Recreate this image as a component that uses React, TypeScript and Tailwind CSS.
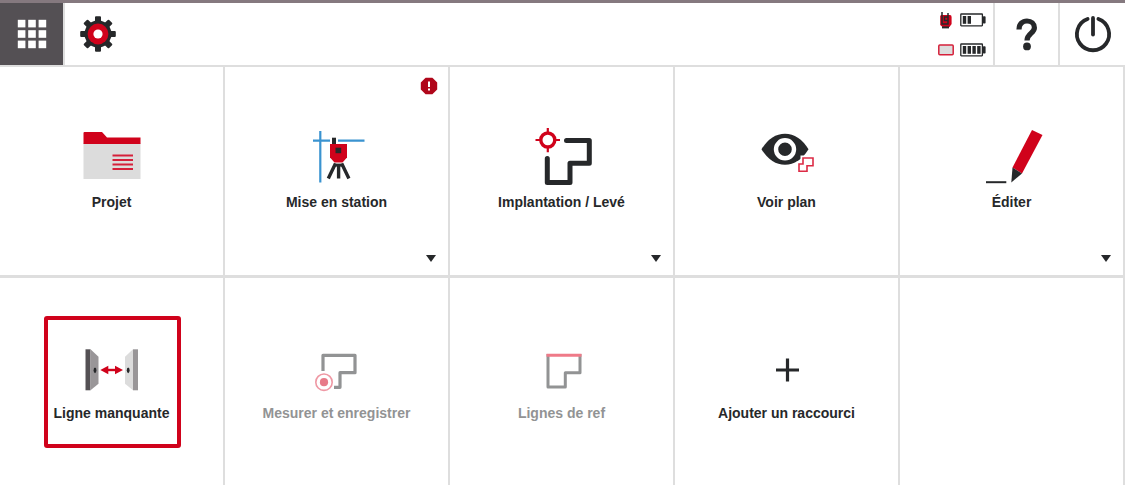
import type { ReactNode } from "react";

type Tile = {
  label: string;
  icon?: ReactNode;
  disabled?: boolean;
  highlighted?: boolean;
  alert?: boolean;
  menu?: boolean;
};

function Icon({ children }: { children: ReactNode }) {
  return (
    <svg viewBox="0 0 64 64" className="h-16 w-16" fill="none" aria-hidden="true">
      {children}
    </svg>
  );
}

function AppsIcon() {
  return (
    <svg viewBox="0 0 30 30" className="h-[30px] w-[30px]" fill="#fff" aria-hidden="true">
      {[0.8, 11.2, 21.6].map((y) =>
        [0.8, 11.2, 21.6].map((x) => <rect key={`${x}-${y}`} x={x} y={y} width="7.6" height="7.6" />)
      )}
    </svg>
  );
}

function GearIcon() {
  return (
    <svg viewBox="0 0 36 36" className="h-9 w-9" aria-hidden="true">
      {[0, 45, 90, 135, 180, 225, 270, 315].map((a) => (
        <path
          key={a}
          d="M13.6 8L15 4.5V1.2Q15 0.2 16 0.2H20Q21 0.2 21 1.2V4.5L22.4 8Z"
          fill="#26282a"
          transform={`rotate(${a} 18 18)`}
        />
      ))}
      <circle cx="18" cy="18" r="13.4" fill="#26282a" />
      <circle cx="18" cy="18" r="10.4" fill="#d0021b" />
      <circle cx="18" cy="18" r="4.6" fill="#fff" />
    </svg>
  );
}

function Battery({ bars }: { bars: number }) {
  return (
    <svg viewBox="0 0 26 14" className="h-[14px] w-[26px]" aria-hidden="true">
      <rect x="0.8" y="1" width="21.6" height="11.8" rx="0.5" fill="#fff" stroke="#26282a" strokeWidth="1.3" />
      <rect x="22.8" y="3.2" width="2.8" height="7.4" rx="0.8" fill="#26282a" />
      {[2.8, 7.6, 12.4, 17.2].slice(0, bars).map((x) => (
        <rect key={x} x={x} y="3" width="3.4" height="7.8" fill="#26282a" />
      ))}
    </svg>
  );
}

function StationIcon() {
  return (
    <svg viewBox="0 0 16 18" className="h-[18px] w-4" aria-hidden="true">
      <path d="M3 4H12Q13.6 4 13.6 6V13L11.5 16H4.5L2.2 14V5Z" fill="#d0021b" />
      <path d="M4 1V13H10V6H6.5V9.5H10M10 2V6" fill="none" stroke="#26282a" strokeWidth="1.5" />
      <path d="M4 15.4H11V17.4H4Z" fill="#26282a" />
    </svg>
  );
}

function TabletIcon() {
  return (
    <svg viewBox="0 0 16 12" className="h-3 w-4" aria-hidden="true">
      <rect x="0.8" y="1" width="14.4" height="9.8" rx="1" fill="#ddd" stroke="#d5203a" strokeWidth="1.5" />
    </svg>
  );
}

function HelpIcon() {
  return (
    <svg viewBox="0 0 22 34" className="h-[34px] w-[22px]" fill="none" aria-hidden="true">
      <path d="M3 12.4C3 7 6.5 4 11 4S18.4 6.6 18.4 10.8C18.4 16.4 11 16.4 11 23.6" stroke="#26282a" strokeWidth="5.2" />
      <circle cx="11" cy="29.4" r="3.9" fill="#26282a" />
    </svg>
  );
}

function PowerIcon() {
  return (
    <svg viewBox="0 0 40 40" className="h-10 w-10" fill="none" stroke="#26282a" strokeWidth="3.8" strokeLinecap="round" aria-hidden="true">
      <path d="M14.6 5A16.1 16.1 0 1 0 25.4 5" />
      <path d="M20 4V20.5" />
    </svg>
  );
}

const tiles: Tile[] = [
  {
    label: "Projet",
    icon: (
      <Icon>
        <path d="M3.5 18H60.5V54H3.5Z" fill="#dcdcdc" />
        <path d="M3.5 8Q3.5 7 4.5 7H22L27 12.4H60.5V19H3.5Z" fill="#d0021b" />
        <path d="M32.5 30.5H53M32.5 35H53M32.5 39.5H53M32.5 44H53" stroke="#d5203a" strokeWidth="2.2" />
      </Icon>
    ),
  },
  {
    label: "Mise en station",
    alert: true,
    menu: true,
    icon: (
      <Icon>
        <path d="M15.3 6V57.5M8 15.6H25M33 15.6H59.5" stroke="#3a93d0" strokeWidth="2.2" />
        <path d="M27 12.7H31V19.5H27Z" fill="#26282a" />
        <path d="M25 19H42V32.5L37.5 37.5H29.5L25 32.5Z" fill="#d0021b" />
        <path d="M30.5 22.7H36.2V28.2H30.5Z" fill="#26282a" />
        <path d="M30.5 38.5L23.3 53.5M36.7 38.5L43.9 53.5M33.6 39V53.5" stroke="#26282a" strokeWidth="3.4" />
        <path d="M29.8 38.6H37.4V41.6H29.8Z" fill="#26282a" />
      </Icon>
    ),
  },
  {
    label: "Implantation / Levé",
    menu: true,
    icon: (
      <Icon>
        <circle cx="17.8" cy="15" r="7" stroke="#d0021b" strokeWidth="3.4" />
        <path d="M17.8 3V9M17.8 21V27.3M5.5 15H11M24.5 15H30" stroke="#d0021b" strokeWidth="2.2" />
        <path d="M36.5 15.5H59.3V38.2H40V57.5H17.3V33.5" stroke="#26282a" strokeWidth="5" strokeLinecap="round" strokeLinejoin="round" />
      </Icon>
    ),
  },
  {
    label: "Voir plan",
    icon: (
      <Icon>
        <path d="M6.5 24.3Q16 8.7 30 8.7T53.5 24.3Q44 39.8 30 39.8T6.5 24.3Z" fill="#26282a" />
        <circle cx="30" cy="24.3" r="9" stroke="#fff" strokeWidth="4.4" />
        <path d="M48 33H58V40.7H52V46.3H44V39H48Z" fill="#fff" stroke="#fff" strokeWidth="5" />
        <path d="M48 33H58V40.7H52V46.3H44V39H48Z" stroke="#dc2b45" strokeWidth="1.6" />
      </Icon>
    ),
  },
  {
    label: "Éditer",
    menu: true,
    icon: (
      <Icon>
        <path d="M52 5L62.5 10L42 48.5L32.5 42.5Z" fill="#d0021b" />
        <path d="M32.5 42.5L42 48.5L31.3 57.5Z" fill="#26282a" />
        <path d="M6 57.2H26.3" stroke="#26282a" strokeWidth="2" />
      </Icon>
    ),
  },
  {
    label: "Ligne manquante",
    highlighted: true,
    icon: (
      <Icon>
        <path d="M5.5 13.3H10.5V54.3H5.5Z" fill="#545054" />
        <path d="M10.5 13.3L18.5 20.7V47.7L10.5 54.3Z" fill="#999698" />
        <path d="M53 13.3L45 20.7V47.7L53 54.3Z" fill="#dcdcdc" />
        <path d="M53 13.3H58V54.3H53Z" fill="#999698" />
        <ellipse cx="15" cy="34.3" rx="1.4" ry="2.9" fill="#26282a" />
        <ellipse cx="48.2" cy="34.3" rx="1.4" ry="2.9" fill="#26282a" />
        <path d="M26 34H38" stroke="#d0021b" strokeWidth="2.4" />
        <path d="M20.3 34L28.3 29.7V38.3ZM43 34L35 29.7V38.3Z" fill="#d0021b" />
      </Icon>
    ),
  },
  {
    label: "Mesurer et enregistrer",
    disabled: true,
    icon: (
      <Icon>
        <path d="M18 35V19.3H50V36.7H35V51.3H29" stroke="#929394" strokeWidth="3.2" strokeLinejoin="round" />
        <circle cx="19" cy="46.2" r="8.2" stroke="#ef98a4" strokeWidth="1.6" />
        <circle cx="19" cy="46.2" r="4.1" fill="#e77b89" />
      </Icon>
    ),
  },
  {
    label: "Lignes de ref",
    disabled: true,
    icon: (
      <Icon>
        <path d="M18 18V51H35.3V36.7H50V18" stroke="#929394" strokeWidth="3" strokeLinejoin="round" />
        <path d="M16.5 19.2H51.5" stroke="#ef7a88" strokeWidth="3" />
      </Icon>
    ),
  },
  {
    label: "Ajouter un raccourci",
    icon: (
      <Icon>
        <path d="M32.5 22.5V45.5M21 34H44" stroke="#26282a" strokeWidth="3.2" />
      </Icon>
    ),
  },
  { label: "" },
];

function TileButton({ tile }: { tile: Tile }) {
  return (
    <button
      type="button"
      disabled={tile.disabled}
      className="relative flex w-full flex-col items-center gap-[3px] pt-[58px] text-[#26282a] disabled:text-[#929394]"
    >
      {tile.icon}
      <span className="text-[14px] font-bold leading-5">{tile.label}</span>

      {tile.highlighted && (
        <span className="absolute left-11 top-[38px] h-[132px] w-[137px] rounded-[3px] border-4 border-[#d0021b]" />
      )}
      {tile.alert && (
        <svg viewBox="0 0 18 18" className="absolute right-[10px] top-[10px] h-[18px] w-[18px]" aria-hidden="true">
          <path d="M5.6 0.8H12.4L17.2 5.6V12.4L12.4 17.2H5.6L0.8 12.4V5.6Z" fill="#b0061a" />
          <path d="M9 4.5V10M9 11.6V13.6" stroke="#fff" strokeWidth="2" />
        </svg>
      )}
      {tile.menu && (
        <svg viewBox="0 0 10 7" className="absolute bottom-[13px] right-3 h-[7px] w-[10px]" aria-hidden="true">
          <path d="M0 0H10L5 7Z" fill="#26282a" />
        </svg>
      )}
    </button>
  );
}

export default function App() {
  return (
    <div className="flex min-h-screen flex-col bg-white font-['Liberation_Sans',Arial,sans-serif]">
      <div className="h-[3px] bg-[#85797f]" />

      {/* Top bar */}
      <header className="flex h-16 border-b-2 border-[#dedede]">
        <button type="button" aria-label="Applications" className="flex w-[63px] items-center justify-center bg-[#545054]">
          <AppsIcon />
        </button>
        <button type="button" aria-label="Paramètres" className="flex w-[68px] items-center justify-center border-l-2 border-[#dedede]">
          <GearIcon />
        </button>

        <div className="ml-auto grid grid-cols-[16px_26px] content-center items-center gap-x-[6px] gap-y-[14px] pr-[7px]">
          <StationIcon />
          <Battery bars={2} />
          <TabletIcon />
          <Battery bars={4} />
        </div>
        <button type="button" aria-label="Aide" className="flex w-[65px] items-center justify-center border-l-2 border-[#dedede]">
          <HelpIcon />
        </button>
        <button type="button" aria-label="Éteindre" className="flex w-[67px] items-center justify-center border-l-2 border-[#dedede]">
          <PowerIcon />
        </button>
      </header>

      {/* Tiles */}
      <main className="grid flex-1 grid-cols-5 grid-rows-[211px_1fr]">
        {tiles.map((tile, i) => (
          <div key={i} className={`flex border-r-2 border-[#dedede] ${i < 5 ? "border-b-[3px]" : ""}`}>
            {tile.label && <TileButton tile={tile} />}
          </div>
        ))}
      </main>
    </div>
  );
}
